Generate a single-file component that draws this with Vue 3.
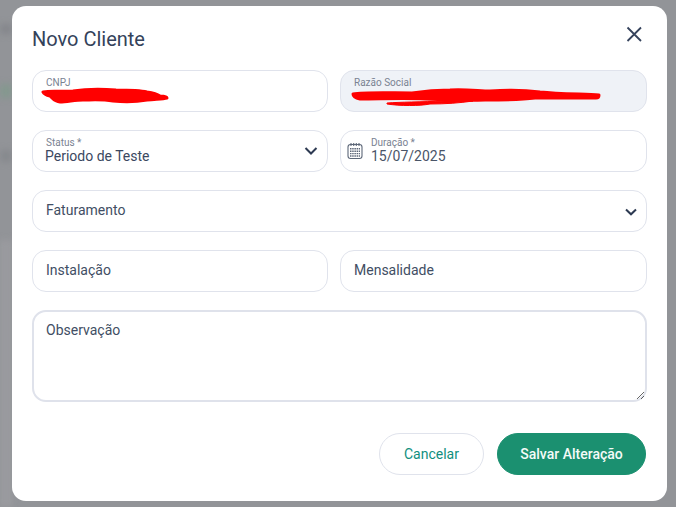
<template>
  <div class="overlay">
    <div class="blob blob-a"></div>
    <div class="blob blob-b"></div>
    <div class="blob blob-c"></div>
    <div class="blob blob-d"></div>
    <div class="modal">
      <div class="modal-header">
        <h2>Novo Cliente</h2>
        <button class="close-btn" title="Fechar">
          <svg width="18" height="18" viewBox="0 0 18 18" fill="none" stroke="#35435c" stroke-width="1.8">
            <path d="M2.5 2.5 16 16M16 2.5 2.5 16" />
          </svg>
        </button>
      </div>

      <div class="form-grid">
        <div class="field stacked">
          <span class="field-label">CNPJ</span>
          <svg class="scribble scribble-cnpj" width="130" height="20" viewBox="0 0 130 20">
            <path
              d="M2 5 C10 4 22 4 32 4 C45 2 62 2 75 3 C88 3 98 3 106 5 C112 6 116 7 119 9 C123 9 126 10 126 11 C122 12 116 12 106 13 C95 15 82 15 72 14 C60 12 50 13 42 13 C34 13 26 15 19 15 C14 15 12 12 9 9 C5 8 3 7 2 5Z"
              fill="#ff0000"
              stroke="#ff0000"
              stroke-width="3"
              stroke-linejoin="round"
            />
          </svg>
        </div>
        <div class="field stacked disabled">
          <span class="field-label">Razão Social</span>
          <svg class="scribble scribble-razao" width="252" height="24" viewBox="0 0 252 24">
            <path
              d="M3 7 C15 5 40 6 62 6 C75 4 90 3 100 3 C115 2 130 4 140 4 C155 3 175 3 190 5 C210 7 235 7 249 8 C249 10 248 11 246 11 C225 11 205 11 185 11 C170 13 150 13 135 13 C115 14 95 13 75 12 C55 11 30 12 10 12 C5 11 3 9 3 7Z"
              fill="#ff0000"
              stroke="#ff0000"
              stroke-width="3"
              stroke-linejoin="round"
            />
            <path d="M37 16 C50 15 70 15 95 14 C105 14 115 14 123 14 C110 16 95 17 80 17 C70 19 50 19 37 17Z" fill="#ff0000" stroke="#ff0000" stroke-width="1" />
          </svg>
        </div>

        <div class="field stacked with-arrow">
          <span class="field-label">Status *</span>
          <span class="field-value status-value">Periodo de Teste</span>
          <svg class="chevron big" width="14" height="10" viewBox="0 0 14 10" fill="none" stroke="#2d3a52" stroke-width="2">
            <path d="M1.5 2 7 7.5 12.5 2" />
          </svg>
        </div>
        <div class="field stacked date">
          <svg class="calendar" width="16" height="18" viewBox="0 0 16 18" fill="none" stroke="#5d6778" stroke-width="1.1">
            <rect x="1" y="2.5" width="14" height="14" rx="2.5" />
            <path d="M4 1v3M6.7 1v3M9.3 1v3M12 1v3" />
            <path
              d="M3 6.8h10M3 9.2h10M3 11.6h10M3 14h10"
              stroke-width="1.4"
              stroke-dasharray="1.5 0.7"
            />
          </svg>
          <span class="field-label">Duração *</span>
          <span class="field-value">15/07/2025</span>
        </div>

        <div class="field single span-2 with-arrow">
          <span class="placeholder">Faturamento</span>
          <svg class="chevron" width="12" height="8" viewBox="0 0 12 8" fill="none" stroke="#2d3a52" stroke-width="2">
            <path d="M1 1.5 6 6.3 11 1.5" />
          </svg>
        </div>

        <div class="field single"><span class="placeholder">Instalação</span></div>
        <div class="field single"><span class="placeholder">Mensalidade</span></div>

        <textarea class="obs span-2" placeholder="Observação"></textarea>
      </div>

      <div class="modal-footer">
        <button class="btn btn-cancel">Cancelar</button>
        <button class="btn btn-save">Salvar Alteração</button>
      </div>
    </div>
  </div>
</template>

<script setup>
</script>

<style>
html, body { margin: 0; }
</style>

<style scoped>
.overlay {
  position: relative;
  box-sizing: border-box;
  width: 676px;
  height: 507px;
  padding: 6px 9px 6px 12px;
  background: #929498;
  overflow: hidden;
  font-family: Roboto, "Liberation Sans", sans-serif;
}
.blob {
  position: absolute;
  left: 0;
  width: 12px;
  filter: blur(3px);
}
.blob-a { top: 24px; height: 10px; background: #85878c; }
.blob-b { top: 84px; height: 14px; background: #84988f; }
.blob-c { top: 150px; height: 12px; background: #878a8e; }
.blob-d { top: 240px; height: 267px; background: #9a9b9f; }
.modal {
  position: relative;
  display: flex;
  flex-direction: column;
  box-sizing: border-box;
  height: 495px;
  padding: 0 20px 0 20px;
  background: #fff;
  border-radius: 14px;
}
.modal-header {
  display: flex;
  align-items: flex-start;
  justify-content: space-between;
  height: 64px;
}
.modal-header h2 {
  margin: 21px 0 0;
  font-size: 20px;
  line-height: 24px;
  font-weight: 400;
  color: #34425a;
}
.close-btn {
  margin: 19px 0 0;
  padding: 0;
  width: 18px;
  height: 18px;
  margin-right: 4px;
  background: none;
  border: none;
  cursor: pointer;
}
.form-grid {
  display: grid;
  grid-template-columns: 296px 307px;
  column-gap: 12px;
  row-gap: 18px;
}
.span-2 { grid-column: span 2; }
.field {
  position: relative;
  box-sizing: border-box;
  height: 42px;
  background: #fff;
  border: 1px solid #e0e3ec;
  border-radius: 14px;
}
.field.disabled { background: #eff2f7; }
.stacked {
  display: flex;
  flex-direction: column;
  padding: 6px 13px 0;
}
.single {
  display: flex;
  align-items: center;
  padding: 0 13px 2px;
}
.field-label {
  font-size: 10px;
  line-height: 12px;
  color: #7a8292;
}
.field-value {
  font-size: 14px;
  line-height: 16px;
  margin-top: -1px;
  color: #4a5568;
}
.status-value { margin-left: -1px; color: #3b485f; }
.placeholder {
  font-size: 14px;
  line-height: 18px;
  color: #414e64;
}
.date { padding-left: 30px; }
.calendar {
  position: absolute;
  left: 6px;
  top: 11px;
}
.chevron {
  position: absolute;
  right: 9px;
  top: 17px;
}
.chevron.big { right: 9px; top: 15px; }
.scribble { position: absolute; }
.scribble-cnpj { left: 8px; top: 16px; }
.scribble-razao { left: 9px; top: 16px; }
.obs {
  box-sizing: border-box;
  display: block;
  width: 615px;
  height: 92px;
  padding: 9px 12px;
  background: #fff;
  border: 2px solid #dfe2eb;
  border-radius: 14px;
  outline: none;
  font-family: inherit;
  font-size: 14px;
  line-height: 18px;
  color: #414e64;
}
.obs::placeholder { color: #414e64; opacity: 1; }
.modal-footer {
  display: flex;
  justify-content: flex-end;
  gap: 13px;
  padding-right: 1px;
  margin-top: 31px;
}
.btn {
  box-sizing: border-box;
  height: 42px;
  border-radius: 21px;
  font-family: inherit;
  font-size: 14px;
  cursor: pointer;
}
.btn-cancel {
  width: 105px;
  background: #fff;
  border: 1px solid #e0e3ec;
  color: #0f8f7e;
}
.btn-save {
  width: 149px;
  background: #1b9070;
  border: 1px solid #1b9070;
  font-weight: 500;
  color: #f4fbf8;
}
</style>
